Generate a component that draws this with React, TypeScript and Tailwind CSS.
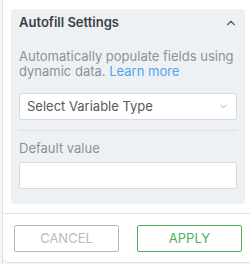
import { ChevronDown, ChevronUp } from "lucide-react";

export default function App() {
    return (
        <div className="w-[250px] h-[264px] bg-[#f4f5f6] flex font-['Inter',sans-serif]">
            <div className="w-[3px] border-r border-[#dde0e3]" />
            <div className="flex-1 bg-white rounded-bl-md border-b border-[#dde0e3] h-[263px] flex flex-col">
                <div className="ml-[8px] mr-[5px] mt-[9px] h-[195px] bg-[#eef1f3] rounded-[3px] px-[8px]">
                    <div className="flex items-center justify-between h-[27px] pt-[1px]">
                        <span className="text-[13px] font-semibold text-[#3b3f45]">Autofill Settings</span>
                        <ChevronUp className="w-[14px] h-[14px] text-[#555b62] mr-[-1px]" strokeWidth={2} />
                    </div>
                    <p className="mt-[13px] text-[13px] leading-[15px] text-[#8b9198]">
                        Automatically populate fields using<br />dynamic data. <span className="text-[#4ea4ee]">Learn more</span>
                    </p>
                    <div className="mt-[14px] h-[27px] bg-white border border-[#d7dbdf] rounded-[3px] flex items-center justify-between pl-[7px] pr-[7px]">
                        <span className="text-[13px] text-[#555a60]">Select Variable Type</span>
                        <ChevronDown className="w-[11px] h-[11px] text-[#8b9198]" strokeWidth={1.6} />
                    </div>
                    <div className="mt-[10px] border-t border-[#dde1e4]" />
                    <div className="mt-[9px] text-[13px] leading-[16px] text-[#8b9198]">Default value</div>
                    <div className="mt-[6px] h-[27px] bg-white border border-[#d7dbdf] rounded-[3px]" />
                </div>
                <div className="mt-[9px] border-t border-[#dde4e4]" />
                <div className="flex gap-[18px] pl-[11px] pr-[5px] mt-[11px]">
                    <button className="w-[105px] h-[27px] border border-[#b3b9bf] rounded-[2px] text-[13px] text-[#b6bcc2] bg-white">CANCEL</button>
                    <button className="w-[105px] h-[27px] border border-[#4cb15c] rounded-[2px] text-[13px] text-[#4cb15c] bg-white">APPLY</button>
                </div>
            </div>
        </div>
    );
}
